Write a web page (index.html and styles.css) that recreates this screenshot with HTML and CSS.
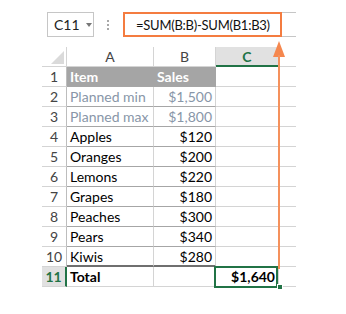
FILE: index.html
```html
<!DOCTYPE html>
<html lang="en">
<head>
    <meta charset="UTF-8">
    <title>SUM minus header rows</title>
    <link rel="stylesheet" href="styles.css">
</head>
<body>
<div class="page">
    <div class="formula-bar">
        <div class="name-box">
            <span>C11</span>
            <span class="caret"></span>
        </div>
        <div class="dots">
            <svg width="3" height="11" viewBox="0 0 3 11">
                <rect x="0" y="0" width="2" height="2" fill="#a8a8a8"/>
                <rect x="0" y="4" width="2" height="2" fill="#a8a8a8"/>
                <rect x="0" y="8" width="2" height="2" fill="#a8a8a8"/>
            </svg>
        </div>
        <div class="fx-field">
            <div class="fx-box">=SUM(B:B)-SUM(B1:B3)</div>
        </div>
    </div>

    <div class="sheet">
        <div class="row head-row">
            <div class="cell corner"><span class="corner-tri"></span></div>
            <div class="cell col-head">A</div>
            <div class="cell col-head">B</div>
            <div class="cell col-head active">C</div>
            <div class="cell col-head"></div>
        </div>
        <div id="rows"></div>

        <svg class="arrow" width="14" height="228" viewBox="0 0 14 228">
            <polygon points="7,0 1,16 13,16" fill="#f5874e"/>
            <rect x="6" y="14" width="2" height="214" fill="#f5915c"/>
        </svg>
    </div>
</div>

<script>
    const data = [
        ['Item', 'Sales', 'title'],
        ['Planned min', '$1,500', 'plan'],
        ['Planned max', '$1,800', 'plan'],
        ['Apples', '$120', ''],
        ['Oranges', '$200', ''],
        ['Lemons', '$220', ''],
        ['Grapes', '$180', ''],
        ['Peaches', '$300', ''],
        ['Pears', '$340', ''],
        ['Kiwis', '$280', 'last'],
        ['Total', '', 'total']
    ];

    let html = '';
    data.forEach((r, i) => {
        const kind = r[2];
        html += '<div class="row ' + kind + '">'
            + '<div class="cell row-head">' + (i + 1) + '</div>'
            + '<div class="cell tcell">' + r[0] + '</div>'
            + '<div class="cell tcell num">' + r[1] + '</div>'
            + (kind === 'total'
                ? '<div class="cell num selected">$1,640<span class="sel-box"></span><span class="handle"></span></div>'
                : '<div class="cell"></div>')
            + '<div class="cell"></div>'
            + '</div>';
    });
    rows.innerHTML = html;
</script>
</body>
</html>
```

FILE: styles.css
```css
* {
    box-sizing: border-box;
    margin: 0;
    padding: 0;
}

body {
    background: #fff;
    font-family: Lato, "Open Sans", sans-serif;
    font-size: 14px;
    color: #000;
}

.page {
    width: 346px;
    height: 314px;
    padding-top: 12px;
}

.formula-bar {
    display: flex;
    padding-left: 47px;
    height: 25px;
}

.name-box {
    width: 47px;
    height: 25px;
    border: 1px solid #c6c6c6;
    display: flex;
    align-items: center;
    padding-left: 6px;
    color: #222;
    line-height: 23px;
}

.caret {
    width: 0;
    height: 0;
    margin-left: 6px;
    border-left: 3.5px solid transparent;
    border-right: 3.5px solid transparent;
    border-top: 4px solid #777;
}

.dots {
    width: 29px;
    display: flex;
    justify-content: center;
    padding-top: 8px;
    padding-right: 1px;
}

.fx-field {
    width: 173px;
    height: 25px;
    border-top: 1px solid #c6c6c6;
    border-bottom: 1px solid #c6c6c6;
}

.fx-box {
    width: 159px;
    height: 25px;
    margin-top: -1px;
    border: 2px solid #f47c40;
    padding: 3px 0 0 11px;
    font-size: 13px;
    letter-spacing: -0.25px;
    line-height: 17px;
    color: #111;
    background: #fff;
    white-space: nowrap;
    overflow: hidden;
}

.sheet {
    position: relative;
    margin: 10px 0 0 42px;
    width: 254px;
}

.row {
    display: grid;
    grid-template-columns: 25px 87px 62px 63px 17px;
    height: 20px;
}

.cell {
    height: 20px;
    line-height: 20px;
    border-right: 1px solid #d4d4d4;
    border-bottom: 1px solid #d4d4d4;
    white-space: nowrap;
    overflow: hidden;
}

.cell:last-child {
    border-right: none;
}

.corner {
    position: relative;
}

.corner-tri {
    position: absolute;
    right: 2px;
    bottom: 2px;
    width: 13px;
    height: 13px;
    background: #dadada;
    clip-path: polygon(100% 0, 100% 100%, 0 100%);
}

.col-head {
    text-align: center;
    color: #444;
    border-bottom-color: #d4d4d4;
}

.col-head.active {
    background: #e1e1e1;
    color: #217346;
    font-weight: bold;
    border-bottom: 2px solid #217346;
    line-height: 19px;
}

.row-head {
    text-align: center;
    color: #444;
    border-right-color: #bdbdbd;
}

.tcell {
    padding-left: 3px;
    border-bottom-color: #a6a6a6;
}

.num {
    text-align: right;
    padding-right: 3px;
}

.title .tcell {
    background: #a5a5a5;
    color: #fff;
    font-weight: bold;
    text-align: left;
    border-right-color: #a5a5a5;
}

.plan .tcell {
    color: #8896a8;
}

.last .tcell {
    border-bottom: 2px solid #6f6f6f;
}

.total .row-head {
    background: #e1e1e1;
    color: #217346;
    font-weight: bold;
    border-right: 2px solid #217346;
}

.total .tcell {
    font-weight: bold;
    border-bottom-color: #d4d4d4;
}

.selected {
    position: relative;
    font-weight: bold;
    overflow: visible;
}

.sel-box {
    position: absolute;
    left: -2px;
    top: -1px;
    width: 64px;
    height: 22px;
    border: 2px solid #217346;
}

.handle {
    position: absolute;
    right: -5px;
    bottom: -4px;
    width: 6px;
    height: 6px;
    background: #217346;
    border: 1px solid #fff;
}

.arrow {
    position: absolute;
    left: 230px;
    top: -6px;
}
```
